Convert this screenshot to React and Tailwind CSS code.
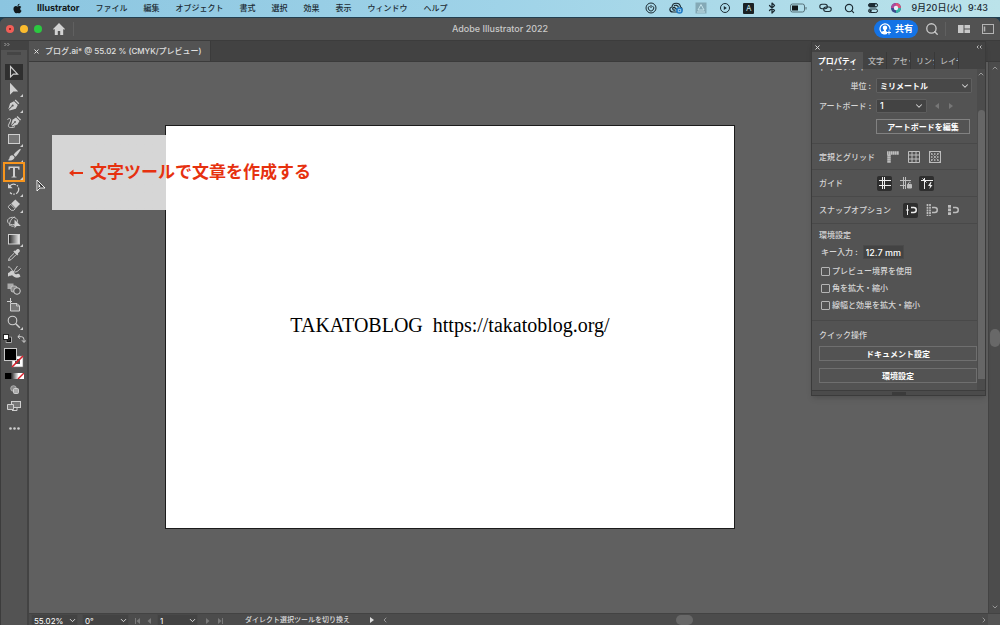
import { useState } from 'react';
import { Bluetooth, ChevronDown, ChevronLeft, ChevronRight, ChevronUp, Search } from 'lucide-react';
import { FaApple } from 'react-icons/fa';

const MENUS = ['ファイル', '編集', 'オブジェクト', '書式', '選択', '効果', '表示', 'ウィンドウ', 'ヘルプ'];

const TOOLS = [
  { id: 'select', label: '選択ツール' },
  { id: 'direct', label: 'ダイレクト選択ツール', more: true },
  { id: 'pen', label: 'ペンツール', more: true },
  { id: 'curve', label: '曲線ツール' },
  { id: 'rect', label: '長方形ツール', more: true },
  { id: 'brush', label: 'ブラシツール', more: true },
  { id: 'type', label: '文字ツール', more: true, marked: true },
  { id: 'rotate', label: '回転ツール', more: true },
  { id: 'eraser', label: '消しゴムツール', more: true },
  { id: 'shape', label: 'シェイプ形成ツール' },
  { id: 'gradient', label: 'グラデーションツール', more: true },
  { id: 'eyedropper', label: 'スポイトツール' },
  { id: 'width', label: '線幅ツール' },
  { id: 'blend', label: 'ブレンドツール' },
  { id: 'artboard', label: 'アートボードツール' },
  { id: 'zoom', label: 'ズームツール', more: true },
];

const TOOL_ART = {
  select: <path d="M4.5 2.5v10.4l2.9-2.8h4.2z" fill="none" stroke="currentColor" strokeWidth="1.1" />,
  direct: <path d="M4 1.8v12l3.300-3.400h4.900z" fill="currentColor" />,
  pen: (
    <>
      <path d="M9.600 2.600 13.300 6.300 12.400 7.200 8.700 3.500z" fill="currentColor" />
      <path d="M8 4.200 11.800 8 9.900 11.800 3.600 13.600 2.900 13 6.300 9.500a1 1 0 1 0-.6-.6L2.300 12.300l1.800-6z" fill="currentColor" />
    </>
  ),
  curve: (
    <>
      <path d="M11.500 2 15 5.500 14.100 6.400 10.600 2.900z" fill="currentColor" />
      <path d="M10 3.600 13.500 7 11.500 10.600 6.200 12.400 5.600 11.900 8.700 8.700a.9.900 0 1 0-.5-.5L5 11.400l1.500-5.700z" fill="currentColor" />
      <path d="M1.500 5.500c2.500-2 4-.5 2.500 2.500s-3 5 .5 5.500c2 .2 3-.2 4.500-.8" fill="none" stroke="currentColor" />
    </>
  ),
  rect: <rect x="2.500" y="3.500" width="11" height="9" fill="#777" stroke="currentColor" />,
  brush: (
    <>
      <path d="M14.200 1.800c-2.500 1.500-5 3.800-6.600 6l1.900 1.900c2-1.900 4-5 5.300-7.300z" fill="currentColor" />
      <path d="M7 8.500c-2-.6-3.300.5-3.500 2.200-.1 1.300-.8 2-1.800 2.300 2.800 1.300 6.700.4 6.900-2.900z" fill="currentColor" />
    </>
  ),
  type: <path d="M2.500 2.500h11v3.200h-1.100c-.1-1.400-.6-1.800-1.900-1.800H9v7.900c0 .7.300.9 1.500 1v.8h-5v-.8c1.200-.1 1.500-.3 1.500-1V3.900H5.500c-1.300 0-1.800.4-1.900 1.800H2.500z" fill="currentColor" />,
  rotate: (
    <>
      <path d="M3.500 5.500a5 5 0 1 1 .5 6" fill="none" stroke="currentColor" strokeWidth="1.200" strokeDasharray="7 1.200 1.500 1.200" />
      <path d="M2 2.500v4.700h4.700z" fill="currentColor" />
    </>
  ),
  eraser: (
    <>
      <path d="M9.300 2.500 14 7 9.800 11.200 5.200 6.600z" fill="currentColor" />
      <path d="M4.600 7.200 9.200 11.800 7.700 13.300H5.300L2.500 10.500V9.300z" fill="none" stroke="currentColor" strokeWidth=".9" />
    </>
  ),
  shape: (
    <>
      <ellipse cx="6.500" cy="7" rx="5" ry="3.700" fill="none" stroke="currentColor" strokeWidth=".9" />
      <path d="M4 12c-1.500-3 2-9 5-9M4.500 11.500c2 1.500 4 .5 4.500-.5" fill="none" stroke="currentColor" strokeWidth=".9" />
      <path d="M8.500 5.500v8.700l2.300-2.300h4z" fill="currentColor" />
    </>
  ),
  gradient: (
    <>
      <defs>
        <linearGradient id="toolGradient">
          <stop stopColor="#222" />
          <stop offset="1" stopColor="#eee" />
        </linearGradient>
      </defs>
      <rect x="2.500" y="3.500" width="11" height="9.500" fill="url(#toolGradient)" stroke="currentColor" />
    </>
  ),
  eyedropper: (
    <>
      <path d="M11 2.300c1.300-1.300 3.900.9 2.500 2.500l-1.700 1.800.5.600-1.200 1.200L7.300 4.600l1.200-1.200.7.600z" fill="currentColor" />
      <path d="M8.200 6.200 3.300 11l-.8 2.500 2.500-.8 4.900-4.900" fill="none" stroke="currentColor" />
    </>
  ),
  width: (
    <>
      <path d="M2 3c3-.5 3 3 5.500 4.500S12 7 14.500 4.500" fill="none" stroke="currentColor" />
      <path d="M2 9c2.500 0 2-3 4.500-2S8 11 11 10s2.500 1 3.500 2.500C11 15 8 13 6.500 11.500S3.500 12 2 12.500z" fill="currentColor" />
      <path d="M11.500 2 4.500 12" stroke="currentColor" strokeWidth=".9" />
    </>
  ),
  blend: (
    <>
      <rect x="1.500" y="2.500" width="6" height="5.500" fill="#aaa" />
      <rect x="5" y="5" width="6" height="6" rx="2" fill="#888" stroke="currentColor" strokeWidth=".8" />
      <circle cx="11" cy="10" r="3.300" fill="#535353" stroke="currentColor" />
    </>
  ),
  artboard: (
    <>
      <path d="M4.500 1v5M1 4.500h5" stroke="currentColor" />
      <path d="M4.500 6.500h6.500l2.500 2.500v5h-9z" fill="#777" stroke="currentColor" />
      <path d="M10.500 6.500V9h3" fill="none" stroke="currentColor" strokeWidth=".8" />
    </>
  ),
  zoom: (
    <>
      <circle cx="6.500" cy="6.500" r="4.300" fill="none" stroke="currentColor" strokeWidth="1.100" />
      <path d="m9.800 9.800 4 4" stroke="currentColor" strokeWidth="1.500" />
    </>
  ),
};

const PANEL_TABS = ['文字', 'アセット', 'リンク', 'レイヤー'];

const CHECKS = ['プレビュー境界を使用', '角を拡大・縮小', '線幅と効果を拡大・縮小'];

function MenuBar() {
  return (
    <header className="flex h-[17px] shrink-0 items-center bg-linear-to-r from-[#8bc5e0] via-[#9fd3e8] to-[#bbe3ea] pr-3 pb-px pl-3 text-[#1c2b33]">
      <FaApple className="mr-[14px] size-[11px] text-[#12181b]" />
      <nav className="flex items-center gap-4 text-[8px] font-medium whitespace-nowrap">
        <a href="#app" className="text-[9px] font-bold text-[#12181b]">Illustrator</a>
        {MENUS.map((m) => (
          <a key={m} href="#menu">{m}</a>
        ))}
      </nav>
      <div className="ml-auto flex items-center gap-3">
        <svg className="size-3" viewBox="0 0 12 12" fill="none" stroke="currentColor" aria-hidden>
          <circle cx="6" cy="6" r="5" />
          <path d="M4.500 4a2.700 2.700 0 1 0 3 0M6 3v3" />
        </svg>
        <svg className="h-3 w-[14px]" viewBox="0 0 14 12" fill="none" aria-hidden>
          <path d="M4 10C0 10 0 5.500 3 5c.5-5 8-5 8.500 0C14 6 13 10 10 10z" stroke="#1c2b33" strokeWidth="1.200" />
          <path d="M6.500 8c-3 1-3.800-2.500-1.500-2.700 1.500 0 2 2.700 4 2.200M5 4c1.500-1.500 4-.5 4.500 1.500" stroke="#1c2b33" strokeWidth="1.200" />
          <circle cx="10.500" cy="8.500" r="3.300" fill="#1b78c4" />
          <path d="M9.300 7.300h2.400v2.400H9.300z" stroke="#d5ecf8" strokeWidth=".7" />
        </svg>
        <svg className="size-3" viewBox="0 0 12 12" fill="none" aria-hidden>
          <rect x=".5" y=".5" width="11" height="11" fill="#84a9b6" />
          <path d="m6 2.500 3 5.500H3z" stroke="#c5e4ec" />
          <path d="M2 10h8" stroke="#c5e4ec" />
        </svg>
        <svg className="size-3" viewBox="0 0 12 12" fill="none" stroke="currentColor" aria-hidden>
          <circle cx="6" cy="6" r="4.500" />
          <path d="m4.800 4 3 2-3 2z" fill="currentColor" stroke="none" />
        </svg>
        <span className="flex size-[11px] items-center justify-center rounded-[1px] bg-[#1a2124] text-[8px] text-[#cbe7ee]">A</span>
        <Bluetooth className="size-3" strokeWidth={2.5} />
        <svg className="h-3 w-[17px]" viewBox="0 0 17 12" fill="none" aria-hidden>
          <rect x=".5" y="2" width="14" height="8" rx="2" stroke="#557079" />
          <rect x="2" y="3.500" width="6" height="5" fill="#12181b" />
          <path d="M16 5v2.500" stroke="#557079" />
        </svg>
        <svg className="h-3 w-[13px]" viewBox="0 0 13 12" fill="none" stroke="currentColor" strokeWidth="1.100" aria-hidden>
          <rect x=".8" y="2.300" width="7.500" height="4.500" rx="2.200" />
          <rect x="4.700" y="5" width="7.500" height="4.500" rx="2.200" />
        </svg>
        <Search className="size-[11px]" strokeWidth={2.5} />
        <svg className="size-3" viewBox="0 0 12 12" fill="none" stroke="currentColor" aria-hidden>
          <rect x="1.500" y="1.500" width="9" height="3.500" rx="1.700" fill="currentColor" />
          <rect x="1.500" y="7" width="9" height="3.500" rx="1.700" />
          <circle cx="9" cy="3.200" r="1" fill="#b5dfea" stroke="none" />
          <circle cx="3.500" cy="8.700" r="1.300" fill="currentColor" stroke="none" />
        </svg>
        <svg className="size-[10px]" viewBox="0 0 10 10" aria-hidden>
          <circle cx="5" cy="5" r="5" fill="#3a4a8c" />
          <path d="M5 0a5 5 0 0 1 5 5L5 5z" fill="#e0527a" />
          <path d="M0 5a5 5 0 0 1 5-5v5z" fill="#b04a9a" />
          <path d="M10 5a5 5 0 0 1-5 5V5z" fill="#35b4a4" />
          <circle cx="5" cy="5" r="2.200" fill="#e5f3f8" />
        </svg>
      </div>
      <p className="ml-[10px] flex gap-[6px] text-[9px] font-medium whitespace-nowrap">
        <span>9月20日(火)</span>
        <span>9:43</span>
      </p>
    </header>
  );
}

function TitleBar() {
  return (
    <div className="relative flex h-[23px] shrink-0 items-center border-b border-[#3c3c3c] bg-[#525252] px-[6px]">
      <div className="flex gap-[6px]">
        <button type="button" aria-label="閉じる" className="flex size-2 items-center justify-center rounded-full bg-[#f25e57]">
          <span className="size-[2px] rounded-full bg-[#7d1512]" />
        </button>
        <button type="button" aria-label="しまう" className="size-2 rounded-full bg-[#fbbb2e]" />
        <button type="button" aria-label="拡大" className="size-2 rounded-full bg-[#2bc840]" />
      </div>
      <button type="button" aria-label="ホーム" className="ml-[11px] text-[#d2d2d2]">
        <svg className="size-3" viewBox="0 0 12 12" fill="currentColor" aria-hidden>
          <path d="M6 0 0 6l.8.800L1.800 6v6h3V8h2.400v4h3V6l1 .8L12 6z" />
        </svg>
      </button>
      <span className="ml-[8px] h-[14px] w-px bg-[#606060]" />
      <h1 className="absolute left-1/2 -translate-x-1/2 text-[9px] font-medium whitespace-nowrap text-[#c9c9c9]">Adobe Illustrator 2022</h1>
      <button type="button" className="ml-auto flex h-[18px] items-center gap-1 rounded-full bg-[#1473e6] px-[5px] text-[9px] font-bold text-white">
        <svg className="size-3" viewBox="0 0 12 12" fill="none" aria-hidden>
          <path d="M8 10.500A5 5 0 1 1 11 6.500" stroke="#fff" strokeWidth="1.200" />
          <path d="M6 2.500c3 0 2.500 3.500 1 4.500v1l1 .7V11H3c-.5-1-1-1-1-2l3-1.300V7C3.500 6 3 2.500 6 2.500z" fill="#fff" />
          <path d="M10 7.500v4M8 9.500h4" stroke="#fff" />
        </svg>
        共有
      </button>
      <button type="button" aria-label="検索" className="ml-[7px] text-[#c8c8c8]">
        <Search className="size-[14px]" strokeWidth={2.3} />
      </button>
      <span className="ml-[6px] h-[14px] w-px bg-[#606060]" />
      <button type="button" aria-label="ドキュメントの配置" className="ml-3 text-[#c8c8c8]">
        <svg className="h-2 w-3" viewBox="0 0 12 8" fill="currentColor" aria-hidden>
          <path d="M0 0h5.500v8H0zM6.500 0H12v3.500H6.500zM6.500 4.500H12V8H6.500z" />
        </svg>
      </button>
      <button type="button" aria-label="ワークスペース" className="ml-3 text-[#b4b4b4]">
        <svg className="h-[10px] w-3" viewBox="0 0 12 10" fill="none" stroke="currentColor" aria-hidden>
          <rect x=".5" y=".5" width="11" height="9" />
          <path d="M2.500 2.500v5" strokeWidth="1.500" />
        </svg>
      </button>
    </div>
  );
}

function ToolRail() {
  const [tool, setTool] = useState('select');

  return (
    <aside className="flex w-[29px] shrink-0 flex-col items-center border-r-2 border-l border-r-[#434343] border-l-[#3c3c3c] bg-[#535353] text-[#cfcfcf]">
      <div className="h-[9px] w-full bg-[#434343] pl-[3px] text-[#bdbdbd]">
        <svg className="size-[7px]" viewBox="0 0 7 7" fill="none" stroke="currentColor" strokeWidth=".8" aria-hidden>
          <path d="m.5 2 1.500 1.500L.5 5M3.500 2 5 3.500 3.500 5" />
        </svg>
      </div>
      <span className="mt-[2px] h-[3px] w-[14px] bg-[#454545]" />
      <div className="mt-[9px] flex h-[266px] shrink-0 flex-col justify-between">
        {TOOLS.map((t) => (
          <button
            key={t.id}
            type="button"
            aria-label={t.label}
            onClick={() => setTool(t.id)}
            className={['relative flex h-4 w-[18px] items-center justify-center', tool === t.id ? 'bg-[#2f2f2f]' : ''].join(' ')}
          >
            <svg className="size-4" viewBox="0 0 16 16" aria-hidden>{TOOL_ART[t.id]}</svg>
            {t.more && (
              <svg className="absolute right-0 bottom-0 size-[3px]" viewBox="0 0 3 3" aria-hidden>
                <path d="M3 0v3H0z" fill="currentColor" />
              </svg>
            )}
            {t.marked && <span className="absolute -inset-[2px] border-2 border-[#f7951d]" />}
          </button>
        ))}
      </div>
      <div className="mt-1 flex gap-[5px]">
        <svg className="size-[9px]" viewBox="0 0 9 9" aria-hidden>
          <rect x="3.500" y="3.500" width="4" height="4" fill="none" stroke="#111" strokeWidth="2" />
          <rect x="3" y="3" width="5.500" height="5.500" fill="none" stroke="#ddd" strokeWidth=".7" />
          <rect x=".5" y=".5" width="5" height="5" fill="#fff" stroke="#222" />
        </svg>
        <svg className="size-[9px]" viewBox="0 0 9 9" fill="none" stroke="currentColor" aria-hidden>
          <path d="M3 .5.8 2.700 3 4.800M1 2.700h3.500q2.500 0 2.500 3V8M5 6.300l2 2.200 2-2.200" />
        </svg>
      </div>
      <svg className="mt-[5px] size-5" viewBox="0 0 20 20" aria-hidden>
        <rect x="8" y="8" width="11" height="11" fill="#fff" stroke="#777" strokeWidth=".6" />
        <rect x="11" y="11" width="5" height="5" fill="#535353" />
        <path d="M8 19 19 8" stroke="#d8202a" strokeWidth="1.600" />
        <rect x=".5" y=".5" width="12" height="12" fill="#000" stroke="#c9c9c9" />
      </svg>
      <svg className="mt-[5px] h-[6px] w-[19px]" viewBox="0 0 19 6" aria-hidden>
        <rect width="6" height="6" fill="#000" />
        <rect x="6" width="7" height="6" fill="url(#toolGradient)" />
        <rect x="13" width="6" height="6" fill="#fff" />
        <path d="m13 6 6-6" stroke="#d8202a" strokeWidth="1.400" />
      </svg>
      <svg className="mt-[6px] size-[9px]" viewBox="0 0 9 9" aria-hidden>
        <circle cx="3.500" cy="3.500" r="2.800" fill="#888" stroke="#bbb" strokeWidth=".8" />
        <rect x="3.500" y="3.500" width="5" height="5" rx="1" fill="#aaa" stroke="#ddd" strokeWidth=".8" />
      </svg>
      <svg className="mt-[7px] h-[10px] w-[14px]" viewBox="0 0 14 10" fill="#777" stroke="currentColor" aria-hidden>
        <rect x="4.500" y=".5" width="9" height="6" />
        <path d="M.5 3.500h6v5h-6z" />
        <path d="M5 9.500h5v-3" fill="none" />
      </svg>
      <button type="button" aria-label="ツールバーを編集" className="mt-4">
        <svg className="h-[3px] w-[11px]" viewBox="0 0 11 3" fill="currentColor" aria-hidden>
          <circle cx="1.500" cy="1.500" r="1.300" />
          <circle cx="5.500" cy="1.500" r="1.300" />
          <circle cx="9.500" cy="1.500" r="1.300" />
        </svg>
      </button>
    </aside>
  );
}

function Divider() {
  return <hr className="border-t border-[#494949]" />;
}

function IconToggle({ label, active, children }) {
  return (
    <button
      type="button"
      aria-label={label}
      className={['flex size-[15px] items-center justify-center rounded-[2px]', active ? 'bg-[#2e2e2e] text-[#ededed]' : 'text-[#bdbdbd]'].join(' ')}
    >
      <svg className="size-3" viewBox="0 0 12 12" fill="none" stroke="currentColor" aria-hidden>{children}</svg>
    </button>
  );
}

function MagnetMark() {
  return <path d="M6 3.500h2.800a2.400 2.400 0 0 1 0 4.900H6" strokeWidth="1.500" />;
}

function PropertiesPanel() {
  const [checks, setChecks] = useState({});

  return (
    <section className="absolute top-0 right-[14px] z-10 w-[175px] border border-[#3b3b3b] bg-[#535353] text-[8px] leading-[12px] font-medium text-[#d6d6d6] shadow-md">
      <div className="flex h-[10px] items-center justify-between bg-[#434343] px-[3px]">
        <button type="button" aria-label="パネルを閉じる">
          <svg className="size-[5px]" viewBox="0 0 5 5" stroke="currentColor" aria-hidden><path d="m.5.5 4 4m0-4-4 4" /></svg>
        </button>
        <svg className="size-[6px]" viewBox="0 0 6 6" fill="none" stroke="currentColor" strokeWidth=".8" aria-hidden>
          <path d="M2.500 1.500 1 3l1.500 1.500M5.500 1.500 4 3l1.500 1.500" />
        </svg>
      </div>
      <div className="flex h-[17px] bg-[#434343] text-[#b8b8b8]">
        <button type="button" className="w-[51px] bg-[#535353] font-bold whitespace-nowrap text-white">プロパティ</button>
        {PANEL_TABS.map((t) => (
          <button key={t} type="button" className="w-6 overflow-hidden border-r border-[#393939] pl-[5px] text-left whitespace-nowrap">{t}</button>
        ))}
      </div>

      <div className="flex">
        <div className="min-w-0 flex-1 [&>div]:px-[7px]">
          <div className="flex h-1 items-end overflow-hidden">
            <h2>ドキュメント</h2>
          </div>
          <div className="grid grid-cols-[52px_1fr] items-center gap-x-[5px] gap-y-[6px] pt-[5px] pb-[9px]">
            <label htmlFor="unit" className="text-right whitespace-nowrap">単位 :</label>
            <div className="relative">
              <select id="unit" className="block h-[15px] w-[96px] appearance-none rounded-[1px] border border-[#606060] bg-[#484848] pl-[3px] font-bold text-white">
                <option>ミリメートル</option>
              </select>
              <ChevronDown className="pointer-events-none absolute top-[3px] left-[84px] size-[10px]" strokeWidth={2.5} />
            </div>
            <label htmlFor="board" className="text-right whitespace-nowrap">アートボード :</label>
            <div className="relative flex items-center">
              <select id="board" className="block h-[14px] w-[51px] appearance-none rounded-[1px] border border-[#5d5d5d] bg-[#434343] pl-[3px] text-[9px] text-white">
                <option>1</option>
              </select>
              <ChevronDown className="pointer-events-none absolute top-[2px] left-[38px] size-[10px]" strokeWidth={2.5} />
              <button type="button" aria-label="前のアートボード" className="ml-2 text-[#777]">
                <svg className="h-[6px] w-1" viewBox="0 0 4 6" aria-hidden><path d="M4 0v6L0 3z" fill="currentColor" /></svg>
              </button>
              <button type="button" aria-label="次のアートボード" className="ml-[10px] text-[#777]">
                <svg className="h-[6px] w-1" viewBox="0 0 4 6" aria-hidden><path d="M0 0v6l4-3z" fill="currentColor" /></svg>
              </button>
            </div>
            <button type="button" className="col-start-2 h-[15px] w-[94px] border border-[#818181] font-bold text-white">アートボードを編集</button>
          </div>
          <Divider />
          <div className="flex h-[25px] items-center gap-[6px]">
            <h3 className="mr-1">定規とグリッド</h3>
            <IconToggle label="定規">
              <path d="M0 2h12M2 3.500V12" strokeWidth="3.500" strokeDasharray="1.700 .3" />
            </IconToggle>
            <IconToggle label="グリッド">
              <path d="M.5.5h11v11H.5zM4 0v12M8 0v12M0 4h12M0 8h12" />
            </IconToggle>
            <IconToggle label="透明グリッド">
              <rect x=".5" y=".5" width="11" height="11" />
              <path d="M2 3h8M2 6h8M2 9h8" strokeWidth="1.500" strokeDasharray="1.500 1.500" />
              <path d="m1 1 10 10M11 1 1 11" strokeWidth=".5" />
            </IconToggle>
          </div>
          <Divider />
          <div className="flex h-[26px] items-center gap-[6px]">
            <h3 className="mr-7">ガイド</h3>
            <IconToggle label="ガイドを表示" active>
              <path d="M0 3.500h12M0 8.500h12M3.500 0v12M5.500 0v12" />
            </IconToggle>
            <IconToggle label="ガイドをロック">
              <path d="M0 3.500h11M0 8.500h6M3.500 0v12M5.500 0v12" />
              <path d="M7.500 7.500h4V11h-4z" fill="currentColor" />
              <path d="M8.500 7V6q1.200-1.500 2.200 0" />
            </IconToggle>
            <IconToggle label="スマートガイド" active>
              <path d="M0 3.500h12M3.500 1v11M1.500 1.500l4 4" />
              <path d="M9.500 5 7 9h2l-.5 3L11.500 8h-2l1-3z" fill="currentColor" stroke="none" />
            </IconToggle>
          </div>
          <Divider />
          <div className="flex h-[26px] items-center gap-[6px]">
            <h3 className="mr-[6px]">スナップオプション</h3>
            <IconToggle label="ポイントにスナップ" active>
              <path d="M2.500 1v10M1 6h3" />
              <MagnetMark />
            </IconToggle>
            <IconToggle label="グリッドにスナップ">
              <path d="M1.500 0v12M4 0v12" strokeDasharray="2 .7" strokeWidth="1.700" />
              <MagnetMark />
            </IconToggle>
            <IconToggle label="ピクセルにスナップ">
              <path d="M2.500 1v10" strokeDasharray="2.700 .9" strokeWidth="3" />
              <MagnetMark />
            </IconToggle>
          </div>
          <Divider />
          <div className="pt-[5px] pb-[9px]">
            <h3>環境設定</h3>
            <div className="mt-1 flex items-center gap-[5px] pl-[2px]">
              <label htmlFor="step">キー入力 :</label>
              <input id="step" defaultValue="12.7 mm" className="h-[14px] w-[41px] border border-[#4a4a4a] bg-[#434343] pl-[2px] text-[9px] text-white" />
            </div>
            <div className="mt-[6px] flex flex-col gap-[5px] pl-[2px]">
              {CHECKS.map((c) => (
                <label key={c} className="flex items-center gap-[2px]">
                  <input
                    type="checkbox"
                    checked={!!checks[c]}
                    onChange={() => setChecks({ ...checks, [c]: !checks[c] })}
                    className="size-[9px] appearance-none rounded-[1px] border border-[#b5b5b5] checked:bg-[#b5b5b5]"
                  />
                  {c}
                </label>
              ))}
            </div>
          </div>
          <Divider />
          <div className="flex flex-col pt-2 pb-[7px]">
            <h3>クイック操作</h3>
            <button type="button" className="mt-[5px] -mr-[3px] h-[15px] border border-[#6f6f6f] font-bold text-white">ドキュメント設定</button>
            <button type="button" className="mt-[7px] -mr-[3px] h-[15px] border border-[#6f6f6f] font-bold text-white">環境設定</button>
          </div>
        </div>
        <div className="-ml-1 flex w-[8px] flex-col items-center bg-[#4c4c4c] pb-[11px]">
          <ChevronUp className="mt-[1px] mb-8 size-2 shrink-0 text-[#aaa]" strokeWidth={2.5} />
          <span className="w-[7px] flex-1 rounded-t-sm bg-[#666]" />
        </div>
      </div>
      <div className="flex h-[5px] items-center justify-center border-t border-[#3d3d3d] bg-[#4b4b4b]">
        <span className="h-[3px] w-[14px] bg-[#3b3b3b]" />
      </div>
    </section>
  );
}

function Canvas() {
  return (
    <main className="relative min-w-0 flex-1 overflow-hidden bg-[#606060]">
      <div className="absolute top-[63px] left-[136px] flex h-[404px] w-[570px] items-center justify-center border border-[#1c1c1c] bg-white pb-1">
        <p className="font-['Liberation_Serif'] text-[20px] whitespace-pre text-black">{'TAKATOBLOG  https://takatoblog.org/'}</p>
      </div>
      <div className="absolute top-[73px] left-[23px] flex h-[75px] w-[300px] items-center bg-linear-to-r from-[#d6d6d6] from-[114px] to-transparent to-[114px] pl-4">
        <p className="flex items-center gap-[6px] text-[17px] font-bold whitespace-nowrap text-[#e6310f]">
          <svg className="h-[10px] w-4" viewBox="0 0 16 10" aria-hidden>
            <path d="M1 5 5.500 1.500V4H15v2H5.500v2.500z" fill="currentColor" />
          </svg>
          文字ツールで文章を作成する
        </p>
      </div>
      <svg className="absolute top-[117px] left-[7px] h-[14px] w-[10px]" viewBox="0 0 10 14" aria-hidden>
        <path d="M1 1v11l3-3h5z" fill="#333" stroke="#fff" strokeWidth=".9" />
        <path d="M2.500 4v5l2-1.500z" fill="#fff" />
      </svg>
    </main>
  );
}

function StatusField({ id, label, value, className }) {
  return (
    <div className={['relative h-[13px] shrink-0', className].join(' ')}>
      <select id={id} aria-label={label} className="block h-full w-full appearance-none border border-[#494949] bg-[#434343] pl-[2px] text-[8px] text-white">
        <option>{value}</option>
      </select>
      <ChevronDown className="pointer-events-none absolute top-[2px] right-[1px] size-[9px]" strokeWidth={2.5} />
    </div>
  );
}

function StepButton({ label, d }) {
  return (
    <button type="button" aria-label={label} className="text-[#7a7a7a]">
      <svg className="size-[6px]" viewBox="0 0 6 6" fill="currentColor" aria-hidden><path d={d} /></svg>
    </button>
  );
}

function StatusBar() {
  return (
    <footer className="flex h-3 shrink-0 items-start overflow-hidden border-t border-[#434343] bg-[#4c4c4c] text-[8px] text-[#dedede]">
      <StatusField id="zoom" label="ズーム" value="55.02%" className="ml-[2px] w-[47px]" />
      <StatusField id="angle" label="回転" value="0°" className="ml-1 w-[47px]" />
      <div className="ml-[6px] flex h-[13px] items-center gap-[6px]">
        <StepButton label="先頭" d="M0 0h1v6H0zM5 0v6L1.500 3z" />
        <StepButton label="前" d="M4 0v6L.5 3z" />
      </div>
      <StatusField id="page" label="アートボード" value="1" className="ml-1 w-[41px]" />
      <div className="ml-[7px] flex h-[13px] items-center gap-[6px]">
        <StepButton label="次" d="M1 0v6l3.500-3z" />
        <StepButton label="最後" d="M5 0h1v6H5zM1 0v6l3.500-3z" />
      </div>
      <p className="ml-[22px] text-[7px] leading-[12px] font-medium whitespace-nowrap">ダイレクト選択ツールを切り換え</p>
      <svg className="ml-[20px] h-[12px] w-[5px]" viewBox="0 0 5 12" aria-hidden><path d="M0 3v6l4-3z" fill="currentColor" /></svg>
      <div className="ml-[6px] flex h-[12px] min-w-0 flex-1 items-center justify-between text-[#a5a5a5]">
        <ChevronLeft className="size-2" strokeWidth={2.5} />
        <span className="h-[10px] w-[17px] rounded-full bg-[#686868]" />
        <ChevronRight className="size-2" strokeWidth={2.5} />
      </div>
      <span className="h-full w-[12px] bg-[#555]" />
    </footer>
  );
}

export default function App() {
  return (
    <div lang="ja" className="flex h-screen flex-col overflow-hidden bg-[#223f50] font-['Inter','Noto_Sans_CJK_JP',sans-serif]">
      <MenuBar />
      <div className="mt-px flex min-h-0 flex-1 flex-col overflow-hidden rounded-t-md bg-[#535353]">
        <TitleBar />
        <div className="relative flex min-h-0 flex-1">
          <ToolRail />
          <div className="flex min-w-0 flex-1 flex-col">
            <div className="flex h-[21px] shrink-0 border-b border-[#3b3b3b] bg-[#424242]">
              <div className="flex items-center gap-[6px] border-r border-[#3b3b3b] bg-[#535353] pr-2 pl-[5px] text-[#e0e0e0]">
                <button type="button" aria-label="タブを閉じる">
                  <svg className="size-[5px]" viewBox="0 0 5 5" stroke="currentColor" aria-hidden><path d="m.5.5 4 4m0-4-4 4" /></svg>
                </button>
                <span className="text-[8px] font-medium whitespace-nowrap">ブログ.ai* @ 55.02 % (CMYK/プレビュー)</span>
              </div>
            </div>
            <div className="flex min-h-0 flex-1">
              <Canvas />
              <div className="flex w-3 shrink-0 flex-col items-center justify-between border-l border-[#434343] bg-[#4c4c4c] py-[2px] text-[#a5a5a5]">
                <ChevronUp className="size-2" strokeWidth={2.5} />
                <span className="h-[18px] w-[10px] rounded-full bg-[#686868]" />
                <ChevronDown className="size-2" strokeWidth={2.5} />
              </div>
            </div>
            <StatusBar />
          </div>
          <PropertiesPanel />
        </div>
      </div>
    </div>
  );
}
